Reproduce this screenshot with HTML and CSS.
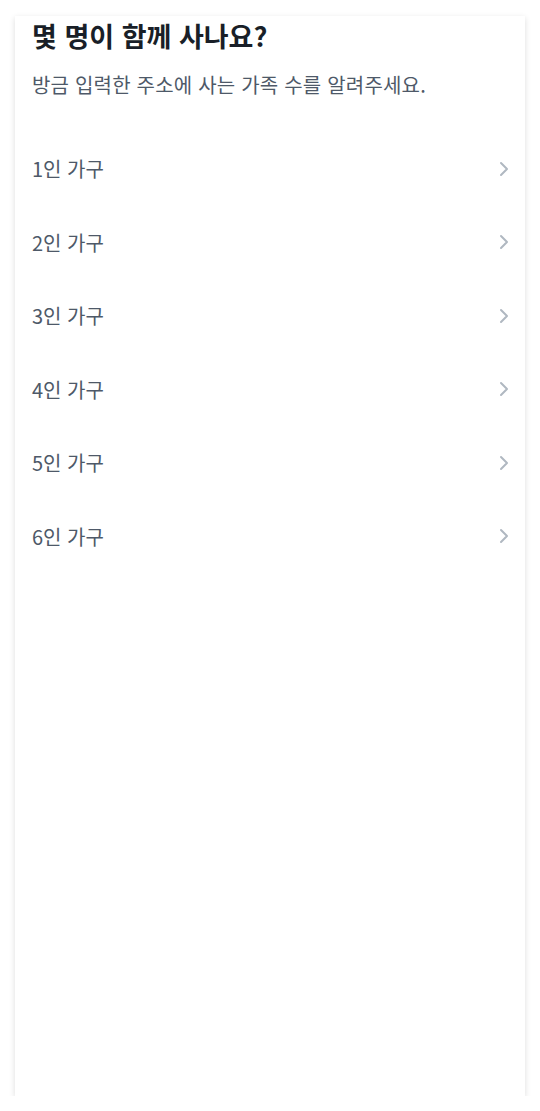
FILE: index.html
```html
<!DOCTYPE html>
<html lang="ko">
<head>
<meta charset="utf-8">
<link rel="stylesheet" href="styles.css">
</head>
<body>
<div class="card">
  <h1 class="title">몇 명이 함께 사나요?</h1>
  <p class="subtitle">방금 입력한 주소에 사는 가족 수를 알려주세요.</p>
  <ul class="list">
    <li class="item"><span>1인 가구</span><svg class="chev" viewBox="0 0 10 16"><path d="M2 2l6 6-6 6"/></svg></li>
    <li class="item"><span>2인 가구</span><svg class="chev" viewBox="0 0 10 16"><path d="M2 2l6 6-6 6"/></svg></li>
    <li class="item"><span>3인 가구</span><svg class="chev" viewBox="0 0 10 16"><path d="M2 2l6 6-6 6"/></svg></li>
    <li class="item"><span>4인 가구</span><svg class="chev" viewBox="0 0 10 16"><path d="M2 2l6 6-6 6"/></svg></li>
    <li class="item"><span>5인 가구</span><svg class="chev" viewBox="0 0 10 16"><path d="M2 2l6 6-6 6"/></svg></li>
    <li class="item"><span>6인 가구</span><svg class="chev" viewBox="0 0 10 16"><path d="M2 2l6 6-6 6"/></svg></li>
  </ul>
</div>
</body>
</html>
```
FILE: styles.css
```css
html, body {
  margin: 0;
  padding: 0;
  background: #ffffff;
}
body {
  font-family: "Noto Sans CJK KR", "Noto Sans", sans-serif;
  padding: 16px 15px 0 15px;
}
.card {
  box-sizing: border-box;
  width: 510px;
  height: 1080px;
  background: #fff;
  box-shadow: 0 2px 6px rgba(0,0,0,0.14);
  padding: 0 16px 0 17px;
}
.title {
  margin: 0;
  font-size: 27px;
  font-weight: 700;
  line-height: 40px;
  color: #191f28;
}
.subtitle {
  margin: 15px 0 0;
  font-size: 20px;
  line-height: 28px;
  color: #4e5968;
  letter-spacing: 0.2px;
}
.list {
  list-style: none;
  margin: 33px 0 0;
  padding: 0;
}
.item {
  display: flex;
  align-items: center;
  justify-content: space-between;
  padding: 22px 0;
  line-height: 29.5px;
  font-size: 20px;
  color: #4e5968;
}
.chev {
  width: 10px;
  height: 16px;
  fill: none;
  stroke: #b0b8c1;
  stroke-width: 2;
  stroke-linecap: round;
  stroke-linejoin: round;
}
```
